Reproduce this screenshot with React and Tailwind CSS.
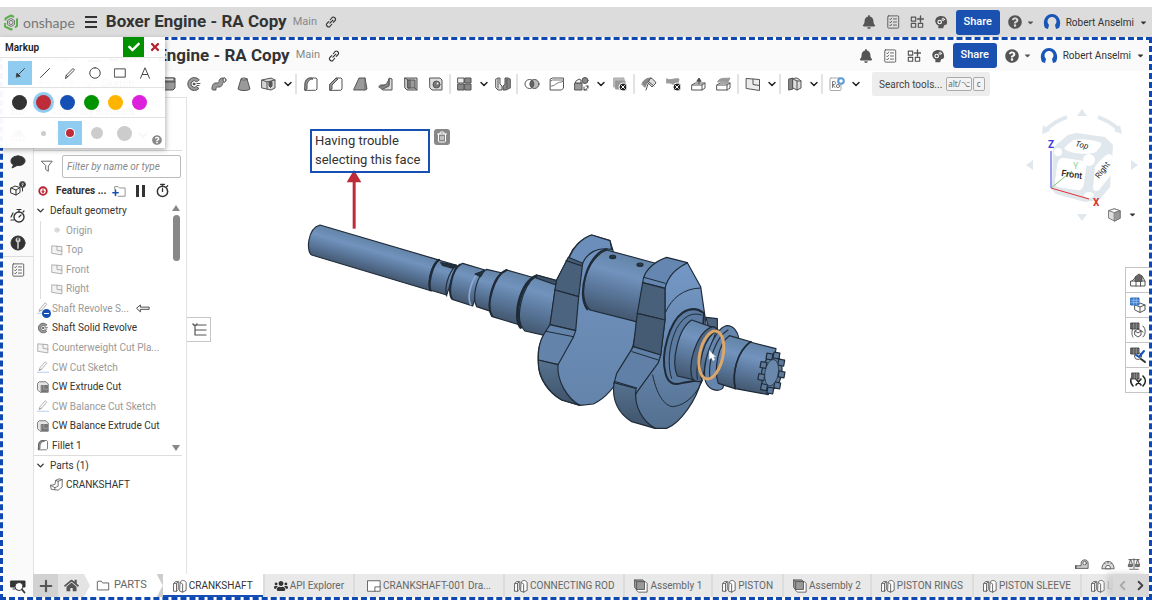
import { useState } from "react";
import { clsx } from "clsx";
import { FaBell, FaCaretDown, FaCheck, FaHome, FaQuestionCircle, FaTimes, FaUsers } from "react-icons/fa";
import { FiChevronDown, FiChevronLeft, FiChevronRight, FiTrash2 } from "react-icons/fi";

/* ---------- icons ---------- */

const Svg = ({ size = 16, className, children, ...rest }) => (
  <svg
    width={size}
    height={size}
    viewBox="0 0 16 16"
    fill="none"
    stroke="#555"
    strokeWidth="1"
    strokeLinejoin="round"
    strokeLinecap="round"
    className={clsx("shrink-0", className)}
    aria-hidden="true"
    {...rest}
  >
    {children}
  </svg>
);

const G = "#9a9a9a";

const icons = {
  extrude: (
    <>
      <path d="M2 4l2-2h10v10l-2 2H2z" fill={G} />
      <path d="M2 6h12" />
      <path d="M3 3l1-1h9v3H2z" fill="#ddd" />
    </>
  ),
  revolve: (
    <>
      <path d="M13 3.500A6.500 6.500 0 1 0 13 12.500L10.500 10.500A3.300 3.300 0 1 1 10.500 5.500z" fill={G} />
      <circle cx="8" cy="8" r="1" fill="#444" />
      <path d="M11 7.500h3M11 9.500h2" />
    </>
  ),
  sweep: (
    <>
      <path d="M1 13c0-3.500 1-6 4-6 2 0 3 0 3-1.500S9 2 12 2h2v4h-1.500c-1 0-.5 5-4.500 5-3 0-3 0-3 3H2z" fill={G} />
      <ellipse cx="13.500" cy="4" rx="1.500" ry="2" fill="#eee" />
    </>
  ),
  loft: (
    <>
      <path d="M5 3L2 13c2 2 10 2 12 0L11 3z" fill={G} />
      <ellipse cx="8" cy="3" rx="3" ry="1" fill="#ddd" />
    </>
  ),
  thicken: (
    <>
      <path d="M1 4l9-2 4 2v8l-4 2-9-2z" fill="#d5d5d5" />
      <path d="M1 4l5 2 8-2M6 6v7" />
      <path d="M8 6v4l1.500 1.500L11 10V6z" fill="#555" />
    </>
  ),
  fillet: (
    <>
      <path d="M2 14V8c0-4 2-6 6-6h5l1 1v10l-1 1z" fill="#fff" />
      <path d="M2 9c0-4 2-7 6-7l2 1C6 3 4 6 4 10v3l-2 1z" fill={G} />
    </>
  ),
  chamfer: (
    <>
      <path d="M2 14V8l6-6h5l1 1v10l-1 1z" fill="#fff" />
      <path d="M2 8l6-6 2 1-6 6v4l-2 1z" fill={G} />
    </>
  ),
  draft: (
    <>
      <path d="M1 13L6 2h6l2 11-2 1H1z" fill={G} />
      <path d="M12 2v12" stroke="#666" />
    </>
  ),
  rib: (
    <>
      <path d="M1 11l4 3h9V3l-3-1v7H3z" fill="#ddd" />
      <path d="M2 10c5 0 7-2 9-7v7l-6 3z" fill="#888" />
    </>
  ),
  shell: (
    <>
      <path d="M2 2h12v12H4l-2-2z" fill="#ccc" />
      <path d="M5 4h7v8H5z" fill={G} />
      <path d="M5 4v8h2V4M2 2l3 2M14 14l-2-2" />
    </>
  ),
  hole: (
    <>
      <path d="M2 2h10l2 2v10H4l-2-2z" fill="#ddd" />
      <circle cx="8.500" cy="8.500" r="3.500" fill="#777" />
      <circle cx="9.500" cy="7.500" r="1" fill="#eee" stroke="none" />
    </>
  ),
  pattern: (
    <>
      <path d="M1 2h6v5H1z" fill="#eee" />
      <path d="M8 2h6v5H8zM1 8h6v6H1zM8 8h6v6H8z" fill="#888" />
    </>
  ),
  mirror: (
    <>
      <path d="M1 3l2-1h2v6l2 2v4H3l-2-2z" fill="#e5e5e5" />
      <path d="M15 3l-2-1h-3v6l-2 2v4h3l4-2z" fill="#888" />
      <path d="M3 3v9M12 3v9" />
    </>
  ),
  boolean: (
    <>
      <circle cx="5.500" cy="8" r="4.500" fill="#fff" />
      <circle cx="10.500" cy="8" r="4.500" fill="#bbb" />
      <path d="M8 4.300a4.500 4.500 0 0 1 0 7.400 4.500 4.500 0 0 1 0-7.400z" fill="#666" />
    </>
  ),
  split: (
    <>
      <path d="M1.500 3l2-1h11v10l-2 2h-11z" fill="#fff" />
      <path d="M1.500 10c4 1 6-4 11-4l2-1M1.500 5l2-1h11" stroke="#777" />
    </>
  ),
  transform: (
    <>
      <path d="M1 7h7v7H1z" fill={G} />
      <path d="M2 5l3-2 2 1v3H2z" fill="#eee" />
      <circle cx="11" cy="4.500" r="3" fill="#888" />
      <path d="M10 14c2 0 4-2 4-4M10 11v3h3M12 10h2v2" />
    </>
  ),
  remove: (
    <>
      <path d="M2 2h10v9H2z" fill="#bbb" stroke="#aaa" />
      <path d="M4 5h9v8H4z" fill="#999" stroke="#999" />
      <circle cx="11" cy="11" r="4" fill="#222" stroke="#fff" />
      <path d="M9.500 9.500l3 3M12.500 9.500l-3 3" stroke="#fff" />
    </>
  ),
  modify: (
    <>
      <path d="M1 8c1-4 5-6 9-6l-4 5-2 4z" fill="#888" stroke="#888" />
      <path d="M10 2c2 1 4 3 5 5l-4 4-4-4z" fill="#ddd" />
      <path d="M7 8l-2 6M8 6l5 4" />
    </>
  ),
  deleteFace: (
    <>
      <path d="M1 3c4 2 6-1 12 0l-2 8c-3-1-5-5-10-4z" fill="#999" stroke="#999" />
      <circle cx="11" cy="11" r="4" fill="#222" stroke="#fff" />
      <path d="M9.500 9.500l3 3M12.500 9.500l-3 3" stroke="#fff" />
    </>
  ),
  moveFace: (
    <>
      <path d="M1 9l3-2h10v5l-3 2H1z" fill="#fff" />
      <path d="M1 9h10l3-2M11 9v5" />
      <path d="M8 8V4M6 5l2-3 2 3z" fill="#444" />
    </>
  ),
  replaceFace: (
    <>
      <path d="M1 9l3-2h10v5l-3 2H1z" fill="#fff" />
      <path d="M1 9h10l3-2M11 9v5" />
      <path d="M2 5c3-4 7-2 12-3l-2 4c-4 0-7-1-10 0z" fill="#999" stroke="#999" />
    </>
  ),
  plane: (
    <>
      <path d="M1.500 2.500l13 1v11l-13-2z" fill="#ececec" />
      <path d="M8 3v5.500l6.500 1" />
    </>
  ),
  sheet: (
    <>
      <path d="M2 3l4-1v11l-4 1z" fill="#888" />
      <path d="M6 3c3-2 5-1 8 2v7l-4 2-4-2z" fill="#ddd" />
      <path d="M10 5v9M6 3l4 2h4" />
    </>
  ),
  custom: (
    <>
      <rect x="1" y="2" width="11" height="12.500" rx="1" fill="#fff" stroke="#aaa" />
      <path d="M3.500 11.500V5.500h1.500c2 0 2 3 0 3H3.500l2.500 3" stroke="#777" />
      <circle cx="9" cy="10" r="1.600" stroke="#777" />
      <circle cx="12" cy="5" r="2.800" fill="#fff" stroke="#5d9bd5" strokeWidth="2" />
    </>
  ),
  pencil: <path d="M3 13l1-4 7-7 2 2-7 7zM4 9l2 2" />,
  undo: <path d="M5 3L2 6l3 3M2 6h7c4 0 5 3 4 6" />,
  redo: <path d="M11 3l3 3-3 3M14 6H7c-4 0-5 3-4 6" />,
  origin: (
    <>
      <circle cx="8" cy="8" r="3" fill="#ddd" stroke="#aaa" />
      <circle cx="8" cy="8" r="1" fill="#888" stroke="none" />
    </>
  ),
  sketch: (
    <>
      <path d="M3 12l1-3 7-8 2 2-7 8zM3 12l3-1" />
      <path d="M0 15h16" stroke="#5d95dd" />
    </>
  ),
  extrudeCut: (
    <>
      <path d="M1 3l2-2h9l3 3v11H4l-3-3z" fill="#e5e5e5" />
      <path d="M6 6h8v8H6z" fill="#777" stroke="#666" />
      <path d="M9 6v5h5" stroke="#aaa" />
    </>
  ),
  part: (
    <>
      <path d="M1 9l5-1 1-5 4-2 4 1v9l-5 4-8-1z" fill="#fff" />
      <path d="M7 3l3 1v6l-4 2-5-3M10 4l5-2M6 12v2" />
    </>
  ),
  studio: (
    <>
      <path d="M1 5l2-2h3v9l-2 2H1z" fill="#fff" />
      <path d="M1 5h3v9M4 5l2-2" />
      <path d="M8 4c0-2 5-4 7 0v9l-4 2-3-1z" fill="#fff" />
      <path d="M8 4c1 1 3 1 3 2v9" />
    </>
  ),
  assembly: (
    <>
      <path d="M3 3h10l2 2v10H5l-2-2z" fill="#fff" />
      <path d="M1 1h9l2 2v9H3l-2-2z" fill="#999" />
      <path d="M1 1l2 2h9M3 3v9" />
    </>
  ),
  drawing: (
    <>
      <rect x="1" y="2" width="14" height="12" fill="#fff" />
      <path d="M9 14V9h6" />
    </>
  ),
  folder: <path d="M1.500 3.500v9h13v-8h-7l-1.500-2H2.500z" fill="#fff" />,
  comment: <path d="M8 2C4 2 1 4 1 7c0 2 1 3 2.500 4L2 14l5-2.500c5 .5 8-2 8-4.500 0-3-3-5-7-5z" fill="#333" stroke="#333" />,
  configure: (
    <>
      <path d="M1 7l4-2 5 1.500v5L6 14l-5-2z" stroke="#333" />
      <path d="M1 7l5 2v5M6 9l4-2.500" stroke="#333" />
      <circle cx="12.500" cy="3.500" r="3" fill="#333" />
      <path d="M11.700 3c.2-1 1.800-1 1.600.1L12.500 4v.9" stroke="#fff" strokeWidth=".8" />
      <path d="M12.500 7v3" stroke="#333" />
    </>
  ),
  clock: (
    <>
      <circle cx="9" cy="9" r="5" strokeWidth="1.400" stroke="#333" />
      <path d="M7 1.500h4M9 2v2M13 4l1-1M9 9l2-2M3 5L1 9M1 12h3" strokeWidth="1.200" stroke="#333" />
    </>
  ),
  timer: (
    <>
      <circle cx="8" cy="9" r="5.500" strokeWidth="1.600" stroke="#333" />
      <path d="M6 1.500h4M8 2v2M12.500 4l1-1M8 9V6" strokeWidth="1.400" stroke="#333" />
    </>
  ),
  wrench: (
    <>
      <circle cx="8" cy="8" r="7" fill="#333" stroke="#333" />
      <circle cx="8" cy="5" r="2.500" fill="#ccc" stroke="none" />
      <path d="M8 7v6" stroke="#bbb" strokeWidth="1.800" />
      <path d="M8 3v2" stroke="#333" strokeWidth="1.200" />
    </>
  ),
  checklist: (
    <>
      <rect x="2" y="1" width="12.500" height="14" rx="1" />
      <path d="M4 4.500l1 1 1.500-2M4 8l1 1 1.500-2M4 11.500l1 1 1.500-2M8.500 4.500H12M8.500 8H12M8.500 11.500H12" />
    </>
  ),
  searchBar: (
    <>
      <path d="M1 3h14v6H1z" fill="#333" stroke="#333" />
      <circle cx="9" cy="8.500" r="4" fill="#fff" stroke="#333" />
      <path d="M12 11.500l2.500 3" strokeWidth="1.800" stroke="#333" />
      <path d="M3 11h2" stroke="#333" />
    </>
  ),
  filter: <path d="M2 2.500h12L9.500 8v6L6.500 12V8z" />,
  error: (
    <>
      <circle cx="8" cy="8" r="6" fill="#fff" stroke="#b8232f" strokeWidth="3" />
      <path d="M8 4.500v5.500M6.500 9L8 11l1.500-2z" stroke="#b8232f" strokeWidth="1.500" />
    </>
  ),
  addFolder: (
    <>
      <path d="M3 6V3h4l1.500 1.500H15V14H7" stroke="#888" />
      <path d="M4 7v6M1 10h6" stroke="#1650b5" strokeWidth="1.800" />
    </>
  ),
  rollback: <path d="M1 8l4-3.500V7h10v2.500H5V12z" fill="#fff" stroke="#333" />,
  apps: (
    <>
      <path d="M1.500 2.500h5v4.500h-5zM1.500 9.500h5V14h-5zM9.500 9.500h5V14h-5z" stroke="#555" strokeWidth="1.300" />
      <path d="M12 1v7M8.500 4.500h7" stroke="#555" strokeWidth="1.600" />
    </>
  ),
  learn: (
    <>
      <path d="M5 15v-3C-1 9 1 1 8 1c6 0 7 4 7 8l-1 2-2 .5-1 1.500-.5 2z" fill="#555" stroke="none" />
      <circle cx="6.500" cy="8" r="2" stroke="#fff" strokeWidth="1.300" />
      <circle cx="10.500" cy="5" r="1.300" stroke="#fff" />
    </>
  ),
  link: <path d="M6.500 9.500l4-4M7 5l2.500-3c2-2 6 1.500 4 4L11 8.500M9 11l-2.500 3c-2 2-6-1.500-4-4L5 7.500" strokeWidth="1.500" stroke="#333" />,
  appearance: (
    <>
      <path d="M1 9h14v5H1zM6 9v5M10.500 9v5" />
      <path d="M5 9V5l4-3 3 2v5z" fill="#666" />
      <path d="M12 4l3 5M5 6L2 9" />
    </>
  ),
  tableCube: (
    <>
      <path d="M5 8l5-2 5 2v5l-5 2.500L5 13zM5 8l5 2 5-2M10 10v5" fill="#fff" />
      <path d="M1 1h8v7H1z" fill="#3f82d4" stroke="#2f6cb8" />
      <path d="M1 3.300h8M1 5.600h8M3.700 1v7M6.300 1v7" stroke="#bcd6f5" strokeWidth=".5" />
    </>
  ),
  tableParts: (
    <>
      <path d="M5 9l3-2 3 2v4l-3 2-3-2zM5 9l3 2 3-2M3 7c-2 3-1 6 0 8M13 4c3 3 3 8 0 11M10 8l3 2" />
      <path d="M1 1h8v6H1z" fill="#444" />
      <path d="M1 3h8M1 5h8M3.700 1v6M6.300 1v6" stroke="#bbb" strokeWidth=".5" />
    </>
  ),
  tableCheck: (
    <>
      <circle cx="8" cy="9" r="3.500" fill="#fff" />
      <path d="M11 12l4 3" strokeWidth="2" stroke="#333" />
      <path d="M1 1h8v6H1z" fill="#444" />
      <path d="M1 3h8M1 5h8M3.700 1v6M6.300 1v6" stroke="#bbb" strokeWidth=".5" />
      <path d="M6 8l3 2 5-6" stroke="#1650b5" strokeWidth="2" />
    </>
  ),
  tableVars: (
    <>
      <path d="M3 4c-3 3-3 7 0 10M13 4c3 3 3 7 0 10M6 7l5 6M11 7l-5 6" strokeWidth="1.600" stroke="#222" />
      <path d="M2 1h7v6H2z" fill="#444" />
      <path d="M2 3h7M2 5h7M4.300 1v6M6.600 1v6" stroke="#bbb" strokeWidth=".5" />
    </>
  ),
  listToggle: (
    <>
      <path d="M6 3h9M7 8h8M7 13h8M4 5v8h3M4 8h3" strokeWidth="1.200" />
      <path d="M2 2l2 2 2-2" strokeWidth="1.500" />
    </>
  ),
  tape: (
    <>
      <path d="M1 10h6V7c0-5 8-5 8 0v6H1z" fill="#ccc" />
      <circle cx="11" cy="7" r="2" fill="#fff" />
      <path d="M1 10v3" strokeWidth="1.500" />
    </>
  ),
  protractor: (
    <>
      <path d="M1 13a7 8 0 0 1 14 0z" fill="#ddd" />
      <path d="M5 13a3 3.500 0 0 1 6 0z" fill="#fff" />
      <path d="M4 7l1 1M8 5.500V7M12 7l-1 1" />
    </>
  ),
  scale: (
    <>
      <path d="M2 3h12M8 2v11M3 14h10M4 3L2 9h4zM12 3l-2 6h4z" fill="#ddd" />
      <path d="M2 9h4v2H2zM10 9h4v2h-4z" fill="#888" />
    </>
  ),
};

const Icon = ({ name, size, className }) => (
  <Svg size={size} className={className}>
    {icons[name]}
  </Svg>
);

const Logo = () => (
  <svg width="16" height="17" viewBox="0 0 32 34" fill="none" className="shrink-0" aria-hidden="true">
    <path d="M5 13V9L16 3l6 3M27 9l1 1v14l-4 3M19 30l-3 1L4 25v-7" stroke="#5fae50" strokeWidth="4" strokeLinejoin="round" />
    <path d="M16 9l7 4v8l-7 4-7-4v-8z" stroke="#6f7a6f" strokeWidth="2" />
    <circle cx="16" cy="17" r="4" stroke="#6f7a6f" strokeWidth="2" />
  </svg>
);

const Avatar = () => (
  <svg width="18" height="18" viewBox="0 0 18 18" className="shrink-0" aria-hidden="true">
    <path d="M2 15C-1 9 2 1 9 1s10 8 7 14l-3 1-1-4c3-3 1-8-3-8s-6 5-3 8l-1 4z" fill="#1a55b8" />
  </svg>
);

/* ---------- document bar ---------- */

const DocumentBar = ({ className }) => (
  <header className={clsx("flex shrink-0 items-center justify-between pr-1 pl-[3px]", className)}>
    <div className="flex items-center">
      <Logo />
      <span className="ml-1 font-['Lato'] text-[14px] text-[#777]">onshape</span>
      <button aria-label="Document menu" className="ml-2.5 flex w-3 flex-col gap-[3px]">
        <span className="h-0.5 bg-[#333]" />
        <span className="h-0.5 bg-[#333]" />
        <span className="h-0.5 bg-[#333]" />
      </button>
      <h1 className="ml-[9px] text-[17px] font-bold whitespace-nowrap text-[#333]">Boxer Engine - RA Copy</h1>
      <span className="ml-1.5 text-[11px] text-[#888]">Main</span>
      <button aria-label="Copy link" className="ml-2">
        <Icon name="link" size={12} />
      </button>
    </div>
    <div className="flex items-center">
      <div className="flex items-center gap-2.5 text-[#555]">
        <button aria-label="Notifications" className="flex w-3.5 justify-center"><FaBell size={14} /></button>
        <button aria-label="Tasks"><Icon name="checklist" size={14} /></button>
        <button aria-label="App store"><Icon name="apps" size={14} /></button>
        <button aria-label="Learning center"><Icon name="learn" size={14} /></button>
      </div>
      <button className="ml-2 h-[25px] w-11 rounded-[3px] bg-[#1a50b0] text-[11px] font-medium text-white">Share</button>
      <button aria-label="Help" className="ml-2 flex items-center gap-1 text-[#555]">
        <FaQuestionCircle size={14} />
        <FaCaretDown size={9} />
      </button>
      <button className="ml-2 flex items-center gap-[5px] text-[10px] whitespace-nowrap text-[#333]">
        <Avatar />
        Robert Anselmi
        <FaCaretDown size={9} />
      </button>
    </div>
  </header>
);

/* ---------- feature toolbar ---------- */

const toolGroups = [
  ["extrude", "revolve", "sweep", "loft", "thicken", "more"],
  ["fillet", "chamfer", "draft", "rib", "shell", "hole"],
  ["pattern", "more", "mirror"],
  ["boolean", "split", "transform", "more", "remove"],
  ["modify", "deleteFace", "moveFace", "replaceFace"],
  ["plane", "more"],
  ["sheet", "more"],
  ["custom", "more"],
];

const Toolbar = () => (
  <div className="flex h-[26px] shrink-0 items-center bg-white">
    <div className="flex w-[153px] shrink-0 items-center gap-2.5 pl-[34px] text-[11px] text-[#333]">
      <button aria-label="Undo"><Icon name="undo" size={14} /></button>
      <button aria-label="Redo"><Icon name="redo" size={14} /></button>
      <button className="flex items-center gap-1"><Icon name="pencil" size={12} />Sketch</button>
    </div>
    {toolGroups.map((group, i) => (
      <div key={i} className="flex items-center">
        {i > 0 && <span className="mx-px h-5 w-0.5 bg-[#e3e3e3]" />}
        {group.map((tool, j) =>
          tool === "more" ? (
            <button key={j} aria-label="More tools" className="flex w-[13px] justify-center text-[#222]">
              <FiChevronDown size={12} strokeWidth={3} />
            </button>
          ) : (
            <button key={j} aria-label={tool} className="flex w-[25px] justify-center">
              <Icon name={tool} />
            </button>
          )
        )}
      </div>
    ))}
    <button className="ml-2.5 flex h-6 w-[118px] shrink-0 items-center rounded-xs bg-[#ededed] pl-[7px] text-[10px] whitespace-nowrap text-[#444]">
      Search tools...
      <kbd className="ml-1 rounded-xs border border-[#aaa] bg-[#f3f3f3] px-px font-sans text-[8px] leading-3 text-[#666]">alt/⌥</kbd>
      <kbd className="ml-px rounded-xs border border-[#aaa] bg-[#f3f3f3] px-[3px] font-sans text-[8px] leading-3 text-[#666]">c</kbd>
    </button>
  </div>
);

/* ---------- left side ---------- */

const Rail = () => (
  <nav className="flex w-[30px] shrink-0 flex-col items-center bg-[#fafafa]">
    <button aria-label="Add" className="flex h-6 items-center"><Icon name="apps" size={14} /></button>
    <button aria-label="Versions" className="flex h-[27px] items-center"><Icon name="appearance" size={14} /></button>
    <button aria-label="Comments" className="flex h-[27px] items-center"><Icon name="comment" /></button>
    <button aria-label="Configurations" className="flex h-[27px] items-center"><Icon name="configure" /></button>
    <button aria-label="History" className="flex h-[27px] items-center"><Icon name="clock" /></button>
    <button aria-label="Custom tools" className="flex h-[27px] items-center"><Icon name="wrench" /></button>
    <button aria-label="Release list" className="flex h-[27px] w-full items-center justify-center border-t border-[#ddd]">
      <Icon name="checklist" size={14} />
    </button>
    <button aria-label="Search tabs" className="mt-auto flex h-[23px] items-center"><Icon name="searchBar" /></button>
  </nav>
);

const features = [
  { name: "Origin", icon: "origin", muted: true, child: true },
  { name: "Top", icon: "plane", muted: true, child: true },
  { name: "Front", icon: "plane", muted: true, child: true },
  { name: "Right", icon: "plane", muted: true, child: true },
  { name: "Shaft Revolve S...", icon: "sketch", muted: true, rollback: true },
  { name: "Shaft Solid Revolve", icon: "revolve" },
  { name: "Counterweight Cut Pla...", icon: "plane", muted: true },
  { name: "CW Cut Sketch", icon: "sketch", muted: true },
  { name: "CW Extrude Cut", icon: "extrudeCut" },
  { name: "CW Balance Cut Sketch", icon: "sketch", muted: true },
  { name: "CW Balance Extrude Cut", icon: "extrudeCut" },
  { name: "Fillet 1", icon: "fillet" },
];

const FeatureRow = ({ name, icon, muted, child, rollback }) => (
  <li className={clsx("flex items-center gap-[3px] whitespace-nowrap", child ? "ml-1.5 border-l border-[#ddd] pl-2.5" : "pl-[3px]", muted && "text-[#999]")}>
    <span className="relative">
      <Icon name={icon} size={12} className={clsx(muted && "opacity-60")} />
      {rollback && (
        <span className="absolute -right-0.5 -bottom-1 flex size-[9px] items-center justify-center rounded-full bg-[#1650b5]">
          <span className="h-px w-[5px] bg-white" />
        </span>
      )}
    </span>
    <span>{name}</span>
    {rollback && <Icon name="rollback" size={14} className="ml-1" />}
  </li>
);

const FeaturePanel = () => {
  const [filter, setFilter] = useState("");

  return (
    <aside className="flex w-[154px] shrink-0 flex-col border border-b-0 border-[#e2e2e2] bg-white text-[10px] text-[#333]">
      <div className="mr-1 flex h-[53px] flex-col gap-1 border-b border-[#ddd] pt-1.5 pl-1">
        <span className="pl-3">Assembly contexts</span>
        <select aria-label="Assembly context" className="h-6 w-[114px] rounded-xs border border-[#ccc] pl-3">
          <option>None</option>
        </select>
      </div>
      <div className="flex h-[30px] items-center gap-2 pr-[5px] pl-1.5">
        <Icon name="filter" size={14} />
        <input
          aria-label="Filter features"
          value={filter}
          onChange={(e) => setFilter(e.target.value)}
          placeholder="Filter by name or type"
          className="h-[23px] w-full min-w-0 rounded-xs border border-[#bbb] px-1 italic placeholder:text-[#888]"
        />
      </div>
      <div className="flex h-5 items-center pb-px pl-1">
        <Icon name="error" size={10} />
        <h2 className="ml-2 text-[10px] font-bold whitespace-nowrap">Features ...</h2>
        <button aria-label="Add folder" className="ml-1.5"><Icon name="addFolder" size={14} /></button>
        <button aria-label="Pause regeneration" className="ml-2.5 flex gap-[3px]">
          <span className="h-3 w-[3px] bg-[#333]" />
          <span className="h-3 w-[3px] bg-[#333]" />
        </button>
        <button aria-label="Regeneration times" className="ml-2.5"><Icon name="timer" size={15} /></button>
      </div>
      <div className="mr-1 flex border-b border-[#ddd]">
        <ul className="grid h-[254px] min-w-0 flex-1 auto-rows-fr">
          <li className="flex items-center gap-1 pl-px">
            <FiChevronDown size={11} strokeWidth={3} />
            Default geometry
          </li>
          {features.map((feature) => (
            <FeatureRow key={feature.name} {...feature} />
          ))}
        </ul>
        <div className="flex w-3 flex-col items-center justify-between py-1 text-[#888]">
          <div className="flex flex-col items-center gap-1">
            <span className="border-x-4 border-b-[6px] border-x-transparent border-b-[#888]" />
            <span className="h-[46px] w-[7px] rounded-full bg-[#888]" />
          </div>
          <span className="border-x-4 border-t-[6px] border-x-transparent border-t-[#888]" />
        </div>
      </div>
      <div className="flex h-[19px] items-center gap-1 pl-px">
        <FiChevronDown size={11} strokeWidth={3} />
        Parts (1)
      </div>
      <div className="flex h-[19px] items-center gap-[3px] pl-4">
        <Icon name="part" size={13} />
        CRANKSHAFT
      </div>
    </aside>
  );
};

/* ---------- model ---------- */

const Shade = ({ id, from, to }) => (
  <linearGradient id={id} gradientUnits="userSpaceOnUse" x1={from[0]} y1={from[1]} x2={to[0]} y2={to[1]}>
    <stop offset="0" stopColor="#6484a8" />
    <stop offset=".3" stopColor="#7193bd" />
    <stop offset=".65" stopColor="#587497" />
    <stop offset="1" stopColor="#42566d" />
  </linearGradient>
);

const teeth = [0, 40, 80, 120, 160, 200, 240, 280, 320];

const Crankshaft = () => (
  <svg
    width="490"
    height="280"
    viewBox="-600 -180 1470 840"
    className="absolute top-[63px] left-[113px]"
    stroke="#1f2b38"
    strokeWidth="3.500"
    strokeLinejoin="round"
    strokeLinecap="round"
    fill="none"
    role="img"
    aria-label="Crankshaft"
  >
    <defs>
      <Shade id="rod" from={[270, 368]} to={[243, 462]} />
      <Shade id="collarB" from={[545, 435]} to={[512, 550]} />
      <Shade id="collarD" from={[690, 460]} to={[650, 605]} />
      <Shade id="hub" from={[150, 170]} to={[100, 345]} />
      <Shade id="pin" from={[395, 110]} to={[345, 292]} />
      <Shade id="journal" from={[615, 305]} to={[565, 480]} />
      <Shade id="tip" from={[770, 370]} to={[735, 515]} />
      <linearGradient id="web" x1="0" y1="0" x2="0" y2="1">
        <stop offset="0" stopColor="#7094c0" />
        <stop offset="1" stopColor="#6484ab" />
      </linearGradient>
      <linearGradient id="web2" x1="0" y1="0" x2="0" y2="1">
        <stop offset="0" stopColor="#7498c6" />
        <stop offset=".5" stopColor="#6788b0" />
        <stop offset="1" stopColor="#54708f" />
      </linearGradient>
      <linearGradient id="rim" x1="0" y1="0" x2="0" y2="1">
        <stop offset="0" stopColor="#56728f" />
        <stop offset="1" stopColor="#3e5269" />
      </linearGradient>
    </defs>

    {/* front shaft, stepping up towards the first web */}
    <g transform="translate(-630 -300)">
      <path d="M90 315L450 421L425 513L65 405C48 395 52 325 90 315Z" fill="url(#rod)" />
      <path d="M445 420L500 436L470 525L420 510C412 480 425 432 445 420Z" fill="url(#rod)" />
      <path d="M447 420C430 430 414 480 420 510" strokeWidth="7" />
      <path d="M452 428L500 436L490 445L458 436Z" fill="#23303d" />
      <path d="M495 440C475 460 462 505 470 528" />
      <path d="M518 430L585 450L548 558L487 538C470 515 485 440 518 430Z" fill="url(#collarB)" />
      <path d="M510 434C485 450 474 515 485 535" strokeWidth="6" />
      <path d="M572 454C544 472 530 530 542 554" stroke="#8dabd0" strokeWidth="5" />
      <path d="M590 448L650 462L605 575L560 560C545 530 560 465 590 448Z" fill="url(#collarB)" />
      <path d="M555 462L582 452L572 470Z" fill="#23303d" />
      <path d="M650 450L735 474L690 615L607 590C585 560 605 465 650 450Z" fill="url(#collarD)" />
      <path d="M650 450C612 465 586 555 606 588" strokeWidth="6" />
    </g>
    <path d="M110 165L175 184L150 350L75 333C40 300 65 200 110 165Z" fill="url(#hub)" />
    <path d="M108 168C60 190 38 290 62 322" strokeWidth="9" />
    <path d="M110 165L172 182L168 195L108 174Z" fill="#3c5068" />

    {/* first web */}
    <path d="M275 45L330 62L340 95L340 220L420 250L410 300C408 400 350 520 280 552L240 556L185 540C150 520 115 480 115 430C112 390 118 370 130 345L150 320L165 210L170 180L208 108C220 80 245 55 275 45Z" fill="url(#web)" />
    <path d="M275 45L330 62L335 88C290 80 258 100 245 137L205 122C215 85 245 55 275 45Z" fill="#6b8fba" />
    <path d="M205 112L248 130L236 230L165 210L170 180Z" fill="#49607b" />
    <path d="M198 122L244 137" />
    <path d="M165 210L236 230L227 332L150 314Z" fill="#4c6480" />
    <path d="M150 314L227 332L220 352L174 434L115 420C114 390 118 365 132 342Z" fill="#6383aa" />
    <path d="M138 334L220 350" strokeWidth="3" />
    <path d="M115 420L174 434C170 480 200 535 240 556L185 540C150 520 112 475 115 420Z" fill="url(#rim)" />

    {/* crank pin */}
    <path d="M320 90L475 132L420 308L270 270C230 235 255 115 320 90Z" fill="url(#pin)" />
    <path d="M320 88C262 100 228 225 262 268" strokeWidth="6" />
    <ellipse cx="338" cy="111" rx="9" ry="5" fill="#2a3948" />
    <ellipse cx="420" cy="134" rx="9" ry="5" fill="#2a3948" />

    {/* second web */}
    <path d="M618 292L652 296L652 326L625 320Z" fill="#4c6480" />
    <path d="M562 128L602 200L618 310L604 480C590 540 540 610 500 625L465 625C420 600 400 560 408 515L475 425L482 405L495 300L495 188C505 165 530 140 562 128Z" fill="url(#web2)" />
    <path d="M500 112L562 128C530 145 505 165 495 205L428 188C430 155 460 125 500 112Z" fill="#6486b0" />
    <path d="M432 172L496 190" strokeWidth="3" />
    <path d="M428 188L495 205L495 300L412 280Z" fill="#49607b" />
    <path d="M412 280L495 300L482 405L400 380Z" fill="#455b74" />
    <path d="M400 380L482 405L475 428L408 520L342 490L350 460Z" fill="#6080a7" />
    <path d="M396 395L475 420M344 484L410 504" strokeWidth="3" />
    <path d="M342 488L408 505C400 560 430 605 465 625L395 605C355 580 335 540 342 488Z" fill="url(#rim)" />
    <path d="M497 276C515 235 550 205 602 204M458 465C472 535 500 560 520 560C560 555 592 520 608 480" strokeWidth="3" />

    {/* rear journal and flange */}
    <path d="M612 280C590 262 568 265 548 278C510 305 480 400 497 462C503 485 518 500 550 488L600 480Z" fill="#5b7a9f" strokeWidth="6" />
    <path d="M605 285C575 275 550 290 530 325C505 375 502 440 515 475" strokeWidth="3" />
    <path d="M575 300L650 326L604 484L532 468C512 425 535 325 575 300Z" fill="url(#journal)" />
    <path d="M680 317C700 316 714 335 716 354L668 505C655 516 630 512 618 488C600 440 640 325 680 317Z" fill="#6685ad" />
    <path d="M684 330C650 350 622 420 630 478" />
    <path d="M688 347L755 366L705 506L655 490C640 450 655 370 688 347Z" fill="url(#tip)" />
    <path d="M750 366L828 386L805 524L706 506C695 460 710 400 750 366Z" fill="url(#tip)" />
    <path d="M752 365C710 395 696 460 706 506" strokeWidth="5" />
    <path d="M642 320C600 325 566 410 574 465C578 485 592 488 606 482C590 440 610 350 655 330Z" fill="#4d6785" />
    <path d="M648 328C612 340 584 420 592 478" strokeWidth="3" />

    {/* castellated end */}
    <g transform="translate(815 458) rotate(10)">
      <ellipse rx="30" ry="54" fill="#5b7898" />
      {teeth.map((deg) => (
        <rect
          key={deg}
          x={Math.cos((deg * Math.PI) / 180) * 30 - 9}
          y={Math.sin((deg * Math.PI) / 180) * 54 - 9}
          width="18"
          height="18"
          fill="#5d7a9c"
        />
      ))}
      <ellipse rx="20" ry="40" fill="#6988ac" strokeWidth="2" />
    </g>

    {/* hovered edge */}
    <ellipse cx="634" cy="405" rx="35" ry="73" transform="rotate(12 634 405)" stroke="#dba76b" strokeWidth="9" />
    <path d="M628 392V418L634 413L639 422L644 419L640 410H646Z" fill="#fff" stroke="#fff" strokeWidth="1" />

    {/* markup arrow */}
    <g transform="translate(-630 -300)" stroke="none" fill="#bd2c38">
      <path d="M188 185H197V326H188Z" />
      <path d="M192 150L214 187H170Z" />
    </g>
  </svg>
);

const ViewCube = () => (
  <svg
    width="120"
    height="120"
    viewBox="0 0 120 120"
    className="absolute top-2 right-[9px] font-['Roboto']"
    role="img"
    aria-label="View cube"
  >
    <g fill="#e0e7ed">
      <path d="M62 4l5 7H57zM62 116l5-7H57zM6 60l7-5v10zM118 60l-7-5v10z" />
      <path d="M36 40l-3 5-1 40 4 4 29 8 14-2 11-13 3-42-8-8-29-4-8 2z" />
    </g>
    <g fill="none" stroke="#e0e7ed" strokeWidth="4">
      <path d="M47 12c-8 3-14 6-20 12M78 12c8 3 14 6 20 12" />
    </g>
    <g fill="#e0e7ed">
      <path d="M22 29l1-9 7 6zM102 29l-8-3 6-6z" />
    </g>
    <g fill="#fff">
      <path d="M45 42l8-7c8-2 20 0 26 2 3 1 3 3 1 5l-4 5c-6 3-24 2-30-2-2-1-2-2-1-3z" />
      <rect x="36" y="54" width="29" height="30" rx="6" transform="rotate(8 50 70)" />
      <path d="M75 62c4-6 10-12 14-13 2 0 3 1 3 3l-1 18-12 15c-3 2-6 1-6-2z" />
      <circle cx="69" cy="55" r="6" />
      <circle cx="38" cy="47" r="4" />
      <ellipse cx="69" cy="90" rx="5" ry="3" />
    </g>
    <g strokeWidth="1">
      <path d="M31 83V46" stroke="#3d3de0" />
      <path d="M31 83L52 66" stroke="#7ad07a" />
      <path d="M31 83l38 11" stroke="#e03030" />
    </g>
    <g fontSize="9" fill="#222">
      <text x="41" y="71" fontWeight="500" transform="rotate(8 41 71)">Front</text>
      <text x="55" y="41" fontSize="8" fontStyle="italic" transform="rotate(14 55 41)">Top</text>
      <text x="79" y="74" fontSize="8" transform="rotate(-52 79 74)">Right</text>
    </g>
    <text x="28" y="43" fontSize="10" fontWeight="700" fill="#3d3de0">Z</text>
    <text x="73" y="101" fontSize="10" fontWeight="700" fill="#e03030">X</text>
    <text x="53" y="64" fontSize="9" fill="#8fd88f">Y</text>
  </svg>
);

const sideTools = ["appearance", "tableCube", "tableParts", "tableCheck", "tableVars"];

const Canvas = () => (
  <section className="relative min-w-0 flex-1 overflow-hidden bg-white">
    <Crankshaft />
    <div className="absolute top-8 left-[123px] flex items-start gap-1">
      <p className="border-2 border-[#1650b5] pr-2 pb-0.5 pl-[3px] text-[13px] leading-[19px] whitespace-nowrap text-[#333]">
        Having trouble
        <br />
        selecting this face
      </p>
      <button aria-label="Delete note" className="flex size-4 items-center justify-center rounded-[3px] bg-[#888] text-white">
        <FiTrash2 size={12} />
      </button>
    </div>
    <ViewCube />
    <button aria-label="Display mode" className="absolute top-[110px] right-3 flex items-center gap-1.5 text-[#333]">
      <Svg size={15}>
        <path d="M2 4l6-2 6 2v8l-6 3-6-3z" fill="#ddd" stroke="#777" />
        <path d="M2 4l6 2 6-2-6-2z" fill="#fff" stroke="#777" />
        <path d="M8 6l6-2v8l-6 3z" fill="#999" stroke="#777" />
      </Svg>
      <FaCaretDown size={9} />
    </button>
    <button aria-label="Toggle feature list" className="absolute top-[220px] left-0 flex h-[25px] w-6 items-center justify-center border border-l-0 border-[#c5c5c5] bg-white">
      <Icon name="listToggle" />
    </button>
    <div className="absolute top-[170px] right-0 flex flex-col border-t border-l border-[#c5c5c5] bg-white">
      {sideTools.map((tool) => (
        <button key={tool} aria-label={tool} className="flex h-[25px] w-[23px] items-center justify-center border-b border-[#c5c5c5]">
          <Icon name={tool} />
        </button>
      ))}
    </div>
    <div className="absolute right-2 bottom-[3px] flex gap-3">
      <button aria-label="Measure"><Icon name="tape" size={14} /></button>
      <button aria-label="Angle"><Icon name="protractor" size={14} /></button>
      <button aria-label="Mass properties"><Icon name="scale" size={14} /></button>
    </div>
  </section>
);

/* ---------- tabs ---------- */

const tabs = [
  { name: "API Explorer", icon: "users" },
  { name: "CRANKSHAFT-001 Dra...", icon: "drawing" },
  { name: "CONNECTING ROD", icon: "studio" },
  { name: "Assembly 1", icon: "assembly" },
  { name: "PISTON", icon: "studio" },
  { name: "Assembly 2", icon: "assembly" },
  { name: "PISTON RINGS", icon: "studio" },
  { name: "PISTON SLEEVE", icon: "studio" },
  { name: "LINER", icon: "studio" },
];

const TabBar = () => (
  <footer className="flex h-[23px] shrink-0 bg-[#dcdcdc] text-[10px] whitespace-nowrap text-[#666]">
    <button aria-label="Add tab" className="flex w-[25px] shrink-0 items-center justify-center bg-[#d2d2d2]">
      <Svg size={14}>
        <path d="M8 2v12M2 8h12" stroke="#555" strokeWidth="2.500" />
      </Svg>
    </button>
    <div className="flex shrink-0 bg-[#cdcdcd]">
      <div className="flex bg-white [clip-path:polygon(0_0,calc(100%-6px)_0,100%_50%,calc(100%-6px)_100%,0_100%)]">
        <button aria-label="Tab root" className="flex w-8 items-center bg-[#e4e4e4] pl-1.5 text-[#555] [clip-path:polygon(0_0,calc(100%-6px)_0,100%_50%,calc(100%-6px)_100%,0_100%)]">
          <FaHome size={15} />
        </button>
        <button className="flex items-center gap-1 pr-4 pl-1.5 text-[11px]">
          <Icon name="folder" size={14} />
          PARTS
        </button>
      </div>
    </div>
    <button className="flex shrink-0 items-center gap-0.5 border-b-2 border-[#1650b5] bg-white px-2.5 pt-0.5 text-[#333]">
      <Icon name="studio" size={14} />
      CRANKSHAFT
    </button>
    <div className="flex min-w-0 flex-1 gap-0.5 overflow-hidden pl-0.5">
      {tabs.map((tab) => (
        <button
          key={tab.name}
          className={clsx("flex shrink-0 items-center gap-0.5 bg-[#e9e9e9]", tab.icon === "drawing" ? "px-3" : "px-[9px]")}
        >
          {tab.icon === "users" ? <FaUsers size={14} className="text-[#333]" /> : <Icon name={tab.icon} size={14} />}
          {tab.name}
        </button>
      ))}
    </div>
    <div className="z-1 flex w-9 shrink-0 items-center justify-around bg-[#d9d9d9] shadow-[-6px_0_6px_#d0d0d0]">
      <button aria-label="Scroll tabs left" className="text-[#aaa]"><FiChevronLeft size={15} strokeWidth={3} /></button>
      <button aria-label="Scroll tabs right" className="text-[#444]"><FiChevronRight size={15} strokeWidth={3} /></button>
    </div>
  </footer>
);

/* ---------- markup palette ---------- */

const markupTools = [
  { name: "Arrow", d: "M14 2L4 12M3 13l1-5 4 4z" },
  { name: "Line", d: "M14 2L2 14" },
  { name: "Pencil", d: "M2 15l1-4 9-9 2 2-9 9zM3 11l2 2" },
  { name: "Ellipse", d: "M8 1a7 7 0 1 0 0 14a7 7 0 1 0 0-14z" },
  { name: "Rectangle", d: "M1 2.500h14v11H1z" },
  { name: "Text", d: "M2 15L8 1l6 14M4.500 10h7" },
];

const colors = [
  { name: "Black", className: "bg-[#333]" },
  { name: "Red", className: "bg-[#bd2c38]" },
  { name: "Blue", className: "bg-[#1650b5]" },
  { name: "Green", className: "bg-[#009400]" },
  { name: "Orange", className: "bg-[#ffb400]" },
  { name: "Magenta", className: "bg-[#dc20dc]" },
];

const sizes = [
  { name: "Extra small", dot: "size-[5px]" },
  { name: "Small", dot: "size-2" },
  { name: "Medium", dot: "size-3" },
  { name: "Large", dot: "size-[15px]" },
];

const MarkupPalette = () => {
  const [tool, setTool] = useState("Arrow");
  const [color, setColor] = useState("Red");
  const [size, setSize] = useState("Small");

  return (
    <section className="absolute top-0 left-0 z-10 w-[165px] divide-y divide-[#e2e2e2] bg-white/96 shadow-[1px_2px_5px_rgba(0,0,0,0.3)]">
      <div className="flex h-[21px] items-start bg-white">
        <h2 className="flex-1 pl-[5px] text-[10px] leading-[22px] font-semibold text-[#222]">Markup</h2>
        <button aria-label="Accept" className="flex h-5 w-[21px] items-center justify-center bg-[#009000] text-white">
          <FaCheck size={12} />
        </button>
        <button aria-label="Cancel" className="flex h-5 w-[21px] items-center justify-center text-[#b8232f]">
          <FaTimes size={12} />
        </button>
      </div>
      <div className="flex h-[30px] items-center gap-px pl-2">
        {markupTools.map((t) => (
          <button
            key={t.name}
            aria-label={t.name}
            onClick={() => setTool(t.name)}
            className={clsx("flex size-6 items-center justify-center", tool === t.name && "bg-[#8fccf0]")}
          >
            <Svg size={12}>
              <path d={t.d} fill={t.name === "Arrow" ? "#333" : "none"} stroke="#444" strokeWidth="1.300" />
            </Svg>
          </button>
        ))}
      </div>
      <div className="flex h-[30px] items-center pl-[7px]">
        {colors.map((c) => (
          <button key={c.name} aria-label={c.name} onClick={() => setColor(c.name)} className="flex size-6 items-center justify-center">
            <span className={clsx("size-[15px] rounded-full", c.className, color === c.name && "ring-3 ring-[#8fccf0]")} />
          </button>
        ))}
      </div>
      <div className="flex h-[30px] items-center gap-[3px] pl-[31px]">
        {sizes.map((s) => (
          <button
            key={s.name}
            aria-label={s.name}
            onClick={() => setSize(s.name)}
            className={clsx("flex size-6 items-center justify-center", size === s.name && "bg-[#8fccf0]")}
          >
            <span className={clsx("rounded-full", s.dot, size === s.name ? "bg-[#bd2c38] ring-1 ring-white" : "bg-[#ccc]")} />
          </button>
        ))}
        <button aria-label="Markup help" className="mt-auto mr-[3px] mb-[3px] ml-auto text-[#888]">
          <FaQuestionCircle size={10} />
        </button>
      </div>
    </section>
  );
};

export default function App() {
  return (
    <div className="flex min-h-screen flex-col bg-white pt-[7px] font-['Roboto',sans-serif]">
      <DocumentBar className="h-[30px] bg-[#dcdcdc]" />
      <main className="relative flex flex-1 flex-col">
        <MarkupPalette />
        <div className="flex flex-1 flex-col overflow-hidden border-3 border-dashed border-[#0f48b3]">
          <DocumentBar className="h-[31px] bg-[#fafafa]" />
          <Toolbar />
          <div className="flex flex-1">
            <Rail />
            <div className="flex min-w-0 flex-1 flex-col">
              <div className="flex flex-1">
                <FeaturePanel />
                <Canvas />
              </div>
              <TabBar />
            </div>
          </div>
        </div>
      </main>
    </div>
  );
}
